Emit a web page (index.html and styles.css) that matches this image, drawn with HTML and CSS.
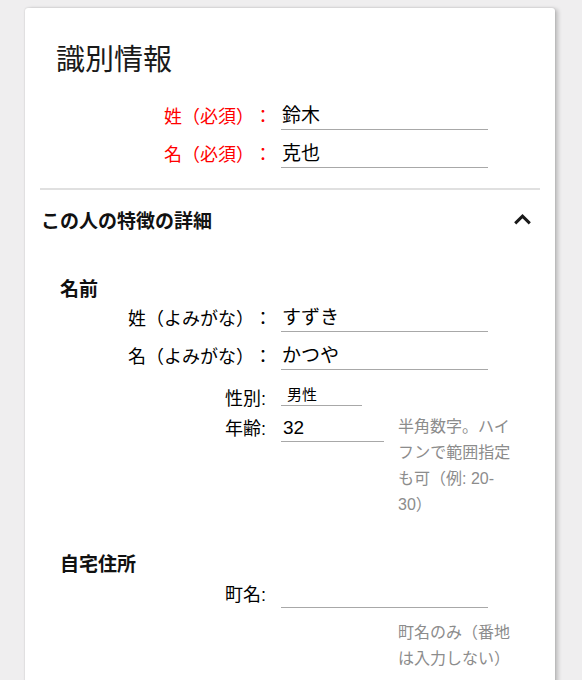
FILE: index.html
```html
<!DOCTYPE html>
<html lang="ja">
<head>
<meta charset="utf-8">
<title>識別情報</title>
<link rel="stylesheet" href="styles.css">
</head>
<body>
<div class="card">
  <h1 class="title">識別情報</h1>
  <div class="rows rows-required">
    <div class="row">
      <label class="label label-req">姓（必須）：</label>
      <input class="field" type="text" value="鈴木">
    </div>
    <div class="row">
      <label class="label label-req">名（必須）：</label>
      <input class="field" type="text" value="克也">
    </div>
  </div>
  <hr class="divider">
  <div class="section-head">
    <span class="section-title">この人の特徴の詳細</span>
    <svg class="chevron" width="19" height="11" viewBox="0 0 19 11" aria-hidden="true">
      <polyline points="2.2,9.3 9.5,2.2 16.8,9.3" fill="none" stroke="#1a1a1a" stroke-width="3" stroke-linejoin="miter"/>
    </svg>
  </div>
  <div class="group">
    <div class="group-title">名前</div>
    <div class="rows">
      <div class="row">
        <label class="label">姓（よみがな）：</label>
        <input class="field" type="text" value="すずき">
      </div>
      <div class="row">
        <label class="label">名（よみがな）：</label>
        <input class="field" type="text" value="かつや">
      </div>
      <div class="row row-gender">
        <label class="label label-short">性別:</label>
        <select class="select">
          <option>男性</option>
          <option>女性</option>
        </select>
      </div>
      <div class="row row-age">
        <label class="label label-short">年齢:</label>
        <input class="field field-age" type="text" value="32">
        <p class="help">半角数字。ハイフンで範囲指定も可（例: 20-<wbr>30）</p>
      </div>
    </div>
  </div>
  <div class="group group-address">
    <div class="group-title">自宅住所</div>
    <div class="rows">
      <div class="row">
        <label class="label label-short">町名:</label>
        <input class="field" type="text" value="">
      </div>
    </div>
    <p class="help help-town">町名のみ（番地は入力しない）</p>
  </div>
</div>
</body>
</html>
```

FILE: styles.css
```css
html, body {
  margin: 0;
  padding: 0;
}

body {
  background: #efeeef;
  padding-top: 8px;
  font-family: "Liberation Sans", "Noto Sans CJK JP", sans-serif;
  color: #000;
  text-spacing-trim: space-all;
}

.card {
  margin-left: 25px;
  width: 530px;
  box-sizing: border-box;
  padding: 0 15px 60px;
  background: #fff;
  border-radius: 3px;
  box-shadow: 0 0 2px rgba(0, 0, 0, 0.18), 3px 1px 4px rgba(0, 0, 0, 0.2);
}

.title {
  margin: 0;
  padding: 32px 0 0 16px;
  font-size: 29px;
  line-height: 40px;
  font-weight: normal;
  color: #1a1a1a;
}

.rows {
  display: flex;
  flex-direction: column;
  gap: 6px;
}

.rows-required {
  margin-top: 18px;
}

.row {
  display: flex;
  align-items: flex-end;
  height: 32px;
}

.label {
  flex-shrink: 0;
  width: 232px;
  box-sizing: border-box;
  text-align: right;
  font-size: 18px;
  line-height: 26px;
  white-space: nowrap;
  text-spacing-trim: space-all;
}

.label-req {
  color: #ff0000;
}

.label-short {
  padding-right: 6px;
}

.field {
  margin: 0 0 0 9px;
  width: 207px;
  height: 32px;
  box-sizing: border-box;
  padding: 0 0 0 1px;
  border: none;
  border-bottom: 1px solid #a8a8a8;
  border-radius: 0;
  background: transparent;
  outline: none;
  font-family: inherit;
  font-size: 19px;
  color: #000;
}

.divider {
  margin: 20px 0 0;
  height: 2px;
  border: none;
  background: #e0e0e0;
}

.section-head {
  margin-top: 9px;
  height: 40px;
  display: flex;
  align-items: center;
  justify-content: space-between;
  padding: 0 8px 0 1px;
}

.section-title {
  font-size: 19px;
  font-weight: bold;
  color: #111;
}

.chevron {
  display: block;
}

.group {
  margin-top: 41px;
}

.group-title {
  padding-left: 20px;
  font-size: 19px;
  line-height: 20px;
  font-weight: bold;
  color: #111;
}

.row-gender {
  height: 30px;
}

.row-gender .label {
  margin-bottom: -6px;
}

.select {
  margin: 0 0 0 9px;
  width: 81px;
  height: 22px;
  box-sizing: border-box;
  padding: 0 0 0 6px;
  -webkit-appearance: none;
  appearance: none;
  border: none;
  border-bottom: 1px solid #a8a8a8;
  border-radius: 0;
  background: transparent;
  outline: none;
  font-family: inherit;
  font-size: 15px;
  color: #000;
}

.row-age {
  height: auto;
  align-items: flex-start;
}

.row-age .label {
  margin-top: 4px;
}

.field-age {
  margin-top: 2px;
  width: 103px;
  height: 28px;
  padding-left: 2px;
}

.help {
  margin: 2px 0 0 14px;
  width: 118px;
  font-size: 16px;
  line-height: 26px;
  color: #8c8c8c;
  text-spacing-trim: space-all;
}

.group-address {
  margin-top: 37px;
}

.group-address .rows {
  margin-top: 1px;
}

.help-town {
  margin: 12px 0 0 358px;
}
```
